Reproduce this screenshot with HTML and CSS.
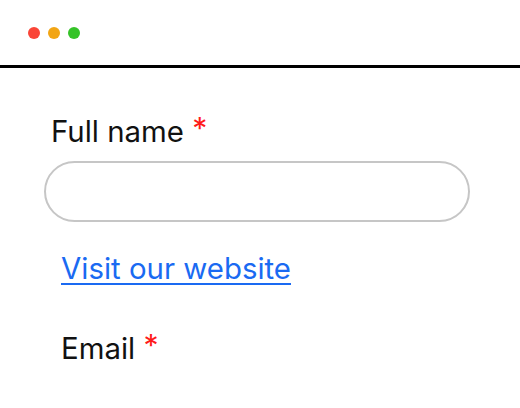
FILE: index.html
```html
<!DOCTYPE html>
<html>
<head>
<meta charset="utf-8">
<link rel="stylesheet" href="styles.css">
</head>
<body>
<div class="header">
  <span class="dot red"></span>
  <span class="dot orange"></span>
  <span class="dot green"></span>
</div>
<div class="form">
  <div class="label name-label">Full name <span class="req">*</span></div>
  <div class="input"></div>
  <a class="link" href="#">Visit our website</a>
  <div class="label email-label">Email <span class="req">*</span></div>
</div>
</body>
</html>
```
FILE: styles.css
```css
html, body {
  margin: 0;
  padding: 0;
  background: #fff;
}
body {
  font-family: Inter, Lato, sans-serif;
  color: #111;
}
.header {
  height: 65px;
  border-bottom: 3px solid #000;
  display: flex;
  align-items: center;
  gap: 8px;
  padding-left: 28px;
}
.dot {
  width: 12px;
  height: 12px;
  border-radius: 50%;
  display: block;
}
.red { background: #fa4537; }
.orange { background: #f2a514; }
.green { background: #35c328; }
.form {
  display: flex;
  flex-direction: column;
  align-items: flex-start;
}
.label {
  font-size: 29.4px;
  line-height: 36px;
}
.name-label {
  margin-top: 45px;
  padding-left: 51px;
}
.req {
  color: #ff1a1a;
  font-size: 30px;
  position: relative;
  top: -3px;
}
.input {
  box-sizing: border-box;
  margin-top: 11px;
  margin-left: 44px;
  width: 426px;
  height: 61px;
  border: 2px solid #c6c6c6;
  border-radius: 31px;
}
.link {
  margin-top: 29px;
  margin-left: 61px;
  font-size: 29.4px;
  line-height: 36px;
  color: #1a6af2;
  text-decoration: underline;
  text-decoration-thickness: 2px;
  text-underline-offset: 4px;
}
.email-label {
  margin-top: 43px;
  padding-left: 61px;
}
```
